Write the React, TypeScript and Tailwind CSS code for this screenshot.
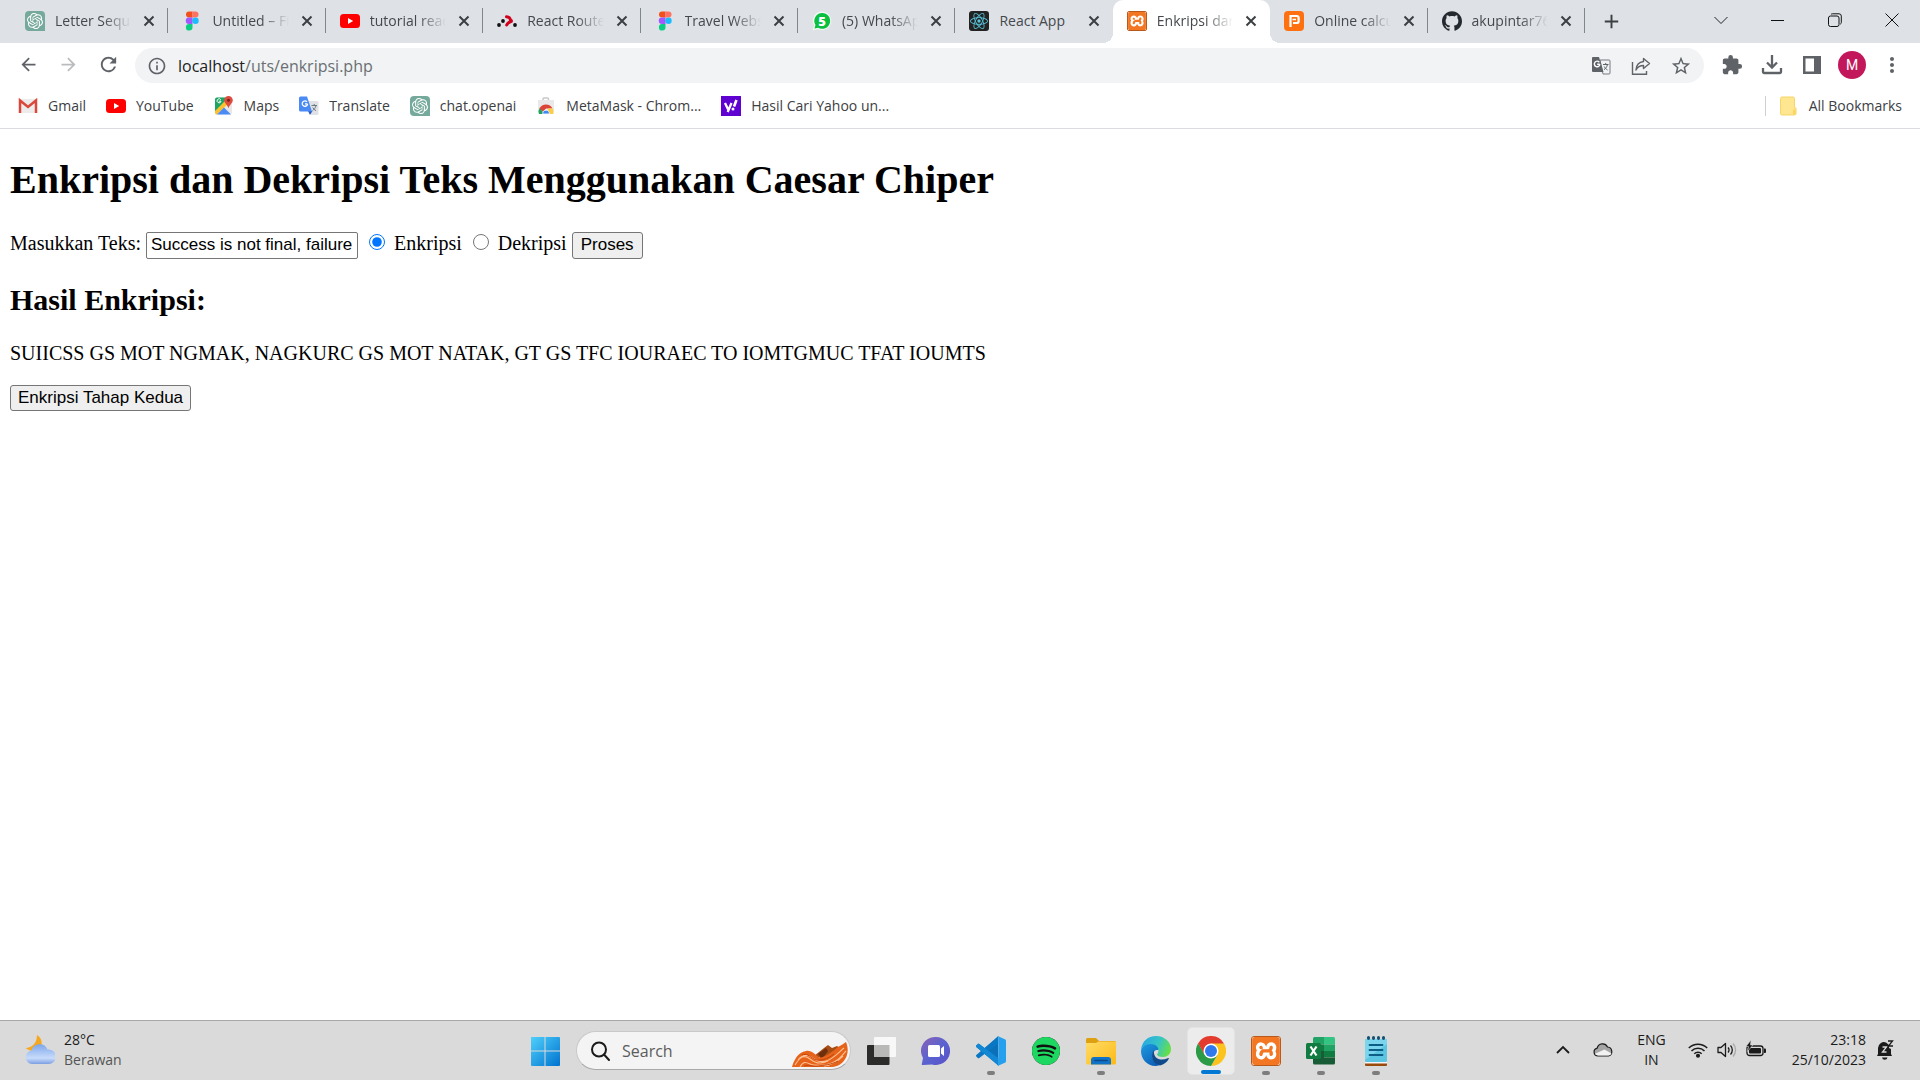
import React, { ReactNode } from "react";
import {
  MdArrowBack,
  MdArrowForward,
  MdRefresh,
  MdInfoOutline,
  MdStarBorder,
  MdExtension,
  MdMoreVert,
  MdAdd,
} from "react-icons/md";
import { SiOpenai, SiXampp, SiReact, SiGithub, SiSpotify } from "react-icons/si";

/* ---------- site icons ---------- */

const OpenAi = () => (
  <span className="flex size-5 items-center justify-center rounded-tl-[4px] rounded-tr-[4px] rounded-bl-[4px] bg-[#75a99b]">
    <SiOpenai className="size-4 text-white" />
  </span>
);

const Figma = () => (
  <svg viewBox="0 0 20 20" className="size-5">
    <path d="M7 0.5h3.5v6H7a3 3 0 0 1 0-6z" fill="#f24e1e" />
    <path d="M10.500 0.500h3a3 3 0 0 1 0 6h-3z" fill="#ff7262" />
    <path d="M7 6.500h3.500v6.500H7a3.200 3.200 0 0 1 0-6.500z" fill="#a259ff" />
    <circle cx="13.500" cy="9.700" r="3.200" fill="#1abcfe" />
    <path d="M7 13h3.500v3.300A3.300 3.300 0 1 1 7 13z" fill="#0acf83" />
  </svg>
);

const YouTube = () => (
  <svg viewBox="0 0 20 20" className="size-5">
    <rect x="0" y="3" width="20" height="14" rx="3.500" fill="#f00" />
    <path d="M8 7v6l5.200-3z" fill="#fff" />
  </svg>
);

const ReactRouter = () => (
  <svg viewBox="0 0 20 20" className="size-5">
    <g fill="#121212">
      <circle cx="2" cy="14" r="1.900" />
      <circle cx="6" cy="10" r="1.900" />
      <circle cx="18" cy="14" r="1.900" />
    </g>
    <path d="M9.500 5.800l2 .4a2 2 0 0 1 1.500 1.500l.5 1.500a2 2 0 0 1-1.500 2.300l-1.500 1.200-.8 1.300" fill="none" stroke="#d0021b" strokeWidth="3" strokeLinecap="round" />
    <circle cx="14" cy="10" r="2" fill="#d0021b" />
  </svg>
);

const WhatsApp = () => (
  <svg viewBox="0 0 20 20" className="size-5">
    <path d="M10.200 0.500a9.300 9.300 0 1 1-4.400 17.600L0.500 19.500l1.600-5A9.300 9.300 0 0 1 10.200 0.500z" fill="#f1f7f2" />
    <path d="M10.200 2a7.900 7.900 0 1 1-4 14.700L2.500 17.600l1-3.600A7.900 7.900 0 0 1 10.200 2z" fill="#0abf3f" />
    <text x="10" y="14.500" textAnchor="middle" fontSize="13" fontWeight="800" fill="#fff" fontFamily="Open Sans, sans-serif">5</text>
  </svg>
);

const ReactApp = () => (
  <span className="flex size-5 items-center justify-center rounded-[3px] bg-[#222]">
    <SiReact className="size-[18px] text-[#58c4dc]" />
  </span>
);

const Xampp = ({ large = false }: { large?: boolean }) => (
  <span
    className={
      large
        ? "flex size-[30px] items-center justify-center rounded-[3px] border border-[#b85a1c] bg-white"
        : "flex size-5 items-center justify-center rounded-[2px] border border-[#b85a1c] bg-white"
    }
  >
    <SiXampp className="size-full text-[#f37623]" />
  </span>
);

const Planet = () => (
  <svg viewBox="0 0 20 20" className="size-5">
    <rect width="20" height="20" rx="4" fill="#ff7110" />
    <path d="M6.500 16V5h6.300a1.800 1.800 0 0 1 1.800 1.800v3.400a1.800 1.800 0 0 1-1.800 1.800H9" fill="none" stroke="#fff" strokeWidth="2.200" />
    <path d="M8.500 8.500h3.500" stroke="#fff" strokeWidth="1.500" />
  </svg>
);

const Gmail = () => (
  <svg viewBox="0 0 20 20" className="size-5">
    <path d="M1 3h18v14H1z" fill="#ececec" />
    <path d="M2 17V4.500l8 6.500 8-6.500V17" fill="none" stroke="#d9483b" strokeWidth="2.500" />
  </svg>
);

const Maps = () => (
  <svg viewBox="0 0 20 20" className="size-5">
    <rect x="1" y="1.500" width="17" height="17" rx="2" fill="#e8e8e8" />
    <path d="M1 3.500a2 2 0 0 1 2-2h12L1 16z" fill="#1da462" />
    <path d="M1 15L14 2l3 3L3 18.500H2L1 17z" fill="#fbc02d" />
    <path d="M3 18.500l7-7 7 7z" fill="#4c8bf5" />
    <path d="M14.500 0a4.300 4.300 0 0 1 4.300 4.300c0 3-3.300 4.200-4.300 8.200-1-4-4.300-5.200-4.300-8.200A4.300 4.300 0 0 1 14.500 0z" fill="#dd4b3e" />
    <circle cx="14.500" cy="4.300" r="1.500" fill="#7d1f16" />
    <path d="M7 5.200H4.800M6.800 3.800a2 2 0 1 0 .2 1.600" fill="none" stroke="#fff" strokeWidth="1" />
  </svg>
);

const Translate = () => (
  <svg viewBox="0 0 20 20" className="size-5">
    <path d="M8 5h10a1.500 1.500 0 0 1 1.500 1.500v11A1.500 1.500 0 0 1 18 19h-6z" fill="#dfe1e5" />
    <path d="M9 15h4.500l-2.500 4z" fill="#2a56c6" />
    <path d="M1.500 0.500H8l5 15H1.500A1.500 1.500 0 0 1 0 14V2A1.500 1.500 0 0 1 1.500 0.500z" fill="#4a8af4" />
    <path d="M8.500 7.800H6M8 5.900a2.700 2.700 0 1 0 .6 2" fill="none" stroke="#fff" strokeWidth="1.300" />
    <path d="M12.500 9.500h5.500M15.200 8v1.500M17 9.500c-.5 2.500-2 4-3.500 5M13.700 11.500c.8 1.500 2 2.500 3.300 3.200" fill="none" stroke="#6b7a80" />
  </svg>
);

const WebStore = () => (
  <svg viewBox="0 0 20 20" className="size-5">
    <path d="M7 4V3a1 1 0 0 1 1-1h3.500a1 1 0 0 1 1 1v1" fill="none" stroke="#c8c8c8" strokeWidth="1.500" />
    <path d="M2 4h16v12.500a1.500 1.500 0 0 1-1.500 1.500h-13A1.500 1.500 0 0 1 2 16.500z" fill="#e9e9e9" />
    <path d="M3 18a7 7 0 0 1 1-6.500l4 6.500z" fill="#1da462" />
    <path d="M3.500 12.500a7.300 7.300 0 0 1 13 0H10l-3 3z" fill="#db4437" />
    <path d="M12 12.500h4.600c1 2 .9 4 .4 5.500h-5.500z" fill="#ffcd40" />
    <path d="M6.800 18a3.300 3.300 0 1 1 6.500 0z" fill="#4285f4" stroke="#fff" strokeWidth=".8" />
  </svg>
);

const Yahoo = () => (
  <svg viewBox="0 0 20 20" className="size-5">
    <rect width="20" height="20" fill="#5f01d1" />
    <path d="M4 7l3 6.300M10.500 7L6.700 16" stroke="#fff" strokeWidth="2.300" fill="none" />
    <path d="M15.500 4l-2.500 6.500" stroke="#fff" strokeWidth="2.600" />
    <circle cx="12" cy="13" r="1.500" fill="#fff" />
  </svg>
);

const Folder = () => (
  <svg viewBox="0 0 20 20" className="size-5">
    <path d="M3 1h11a1.500 1.500 0 0 1 1.500 1.500V12h1.500v5.500a1.500 1.500 0 0 1-1.500 1.500H3a1.500 1.500 0 0 1-1.500-1.500v-15A1.500 1.500 0 0 1 3 1z" fill="#ffe690" stroke="#f8d568" />
    <path d="M14 18.500v-4a1 1 0 0 1 1-1h1.500v4.500z" fill="#fbd65b" />
  </svg>
);

/* ---------- browser ---------- */

const tabs: { title: string; icon: ReactNode; active?: boolean }[] = [
  { title: "Letter Sequence", icon: <OpenAi /> },
  { title: "Untitled – Figma", icon: <Figma /> },
  { title: "tutorial react", icon: <YouTube /> },
  { title: "React Router", icon: <ReactRouter /> },
  { title: "Travel Website", icon: <Figma /> },
  { title: "(5) WhatsApp", icon: <WhatsApp /> },
  { title: "React App", icon: <ReactApp /> },
  { title: "Enkripsi dan", icon: <Xampp />, active: true },
  { title: "Online calculator", icon: <Planet /> },
  { title: "akupintar76", icon: <SiGithub className="size-5 text-[#24292f]" /> },
];

const Tab = ({ title, icon, active, line }: { title: string; icon: ReactNode; active?: boolean; line: boolean }) => (
  <div
    className={
      active
        ? "relative flex h-[43px] min-w-0 items-center rounded-t-[10px] bg-white pr-[9px] pb-[2px] pl-[14px] before:absolute before:bottom-0 before:-left-[10px] before:size-[10px] before:bg-[radial-gradient(circle_at_0_0,transparent_10px,white_10px)] after:absolute after:-right-[10px] after:bottom-0 after:size-[10px] after:bg-[radial-gradient(circle_at_100%_0,transparent_10px,white_10px)]"
        : "flex h-[43px] min-w-0 items-center pb-[2px] pl-[14px]"
    }
  >
    <span className="shrink-0">{icon}</span>
    <span
      className={
        title === "React App"
          ? "ml-[10px] min-w-0 flex-1 text-sm whitespace-nowrap text-[#45494d]"
          : "ml-[10px] min-w-0 flex-1 overflow-hidden text-sm whitespace-nowrap text-[#45494d] [mask-image:linear-gradient(to_right,black_calc(100%-28px),transparent)]"
      }
    >
      {title}
    </span>
    <button aria-label={`Close ${title}`} className="ml-2 flex size-5 shrink-0 items-center justify-center">
      <svg viewBox="0 0 12 12" className="size-3" fill="none" stroke="#3c4043" strokeWidth="2">
        <path d="M1.500 1.500l9 9M10.500 1.500l-9 9" />
      </svg>
    </button>
    {!active && <span className={line ? "ml-2 h-[25px] w-px bg-[#80868b]" : "ml-2 w-px"} />}
  </div>
);

const TitleBar = () => (
  <header className="flex h-[43px] items-center bg-[#dee1e6]">
    <nav className="box-content grid max-w-[1574px] flex-1 auto-cols-fr grid-flow-col pl-[11px]">
      {tabs.map((t, i) => (
        <Tab key={i} {...t} line={i !== 6} />
      ))}
    </nav>
    <button aria-label="New tab" className="ml-3 flex size-7 items-center justify-center">
      <MdAdd className="size-[23px] text-[#3c4043]" />
    </button>
    <div className="ml-auto flex pb-1">
      <button aria-label="Search tabs" className="flex h-9 w-[57px] items-center justify-center">
        <svg viewBox="0 0 14 14" className="size-[14px]" fill="none" stroke="#222"><path d="M.5 4L7 10.500 13.500 4" /></svg>
      </button>
      <button aria-label="Minimize" className="flex h-9 w-[57px] items-center justify-center">
        <svg viewBox="0 0 14 14" className="size-[14px]" stroke="#111"><path d="M0 7.500h13" /></svg>
      </button>
      <button aria-label="Restore" className="flex h-9 w-[57px] items-center justify-center">
        <svg viewBox="0 0 14 14" className="size-[14px]" fill="none" stroke="#111">
          <rect x=".5" y="3" width="10.500" height="10.500" rx="2" />
          <path d="M3 1.500A2 2 0 0 1 4.500.8H11a2.300 2.300 0 0 1 2.300 2.300v6.500a2 2 0 0 1-1 1.600" />
        </svg>
      </button>
      <button aria-label="Close window" className="flex h-9 w-[57px] items-center justify-center">
        <svg viewBox="0 0 14 14" className="size-[14px]" stroke="#111"><path d="M.5.5l13 13M13.500.5l-13 13" /></svg>
      </button>
    </div>
  </header>
);

const toolButton = "flex w-10 items-center justify-center";

const Toolbar = () => (
  <div className="flex h-[43px] items-center bg-white px-2 text-[#5f6368]">
    <button aria-label="Back" className={toolButton}><MdArrowBack className="size-[21px]" /></button>
    <button aria-label="Forward" className={toolButton}><MdArrowForward className="size-[21px] text-[#babcbe]" /></button>
    <button aria-label="Reload" className={toolButton}><MdRefresh className="size-[23px]" /></button>
    <div className="mt-[2px] ml-[7px] flex h-[35px] flex-1 items-center rounded-full bg-[#f1f3f4] pr-[3px] pl-3">
      <MdInfoOutline className="size-5" />
      <a href="#" className="ml-[11px] flex-1 text-base text-[#6b6f73]">
        <span className="text-[#202124]">localhost</span>/uts/enkripsi.php
      </a>
      <button aria-label="Translate" className={toolButton}>
        <svg viewBox="0 0 20 20" className="size-5">
          <path d="M9 4h9a1 1 0 0 1 1 1v12a1 1 0 0 1-1 1h-6z" fill="none" stroke="#777b80" />
          <path d="M2 1h6l4.500 15H2a1 1 0 0 1-1-1V2a1 1 0 0 1 1-1z" fill="#5f6368" />
          <path d="M8.800 8.200H6.200M8.300 6.200a2.800 2.800 0 1 0 .6 2" fill="none" stroke="#fff" strokeWidth="1.400" />
          <path d="M12 8.500h5.500M14.700 7v1.500M16.500 8.500c-.6 2.500-1.800 4-3.500 5.200M13.200 10.500c.8 1.700 2 2.700 3.300 3.500" fill="none" stroke="#5f6368" />
        </svg>
      </button>
      <button aria-label="Share" className={toolButton}>
        <svg viewBox="0 0 20 20" className="size-5" fill="none" stroke="#5f6368" strokeWidth="1.400">
          <path d="M1.500 6v12.300h14V15" />
          <path d="M12.500 2.500L18.500 7.500l-6 5v-3c-3.500 0-6 1.500-7.500 4.500.3-4.500 3-8 7.500-8.500z" strokeLinejoin="round" />
        </svg>
      </button>
      <button aria-label="Bookmark this page" className={toolButton}><MdStarBorder className="size-[22px]" /></button>
    </div>
    <div className="ml-2 flex items-center">
      <button aria-label="Extensions" className={toolButton}><MdExtension className="size-[22px]" /></button>
      <button aria-label="Downloads" className={toolButton}>
        <svg viewBox="0 0 22 22" className="size-[22px]" fill="none" stroke="#5f6368" strokeWidth="2.300">
          <path d="M11 1v12M6 8.500l5 5 5-5M2 14v4a1 1 0 0 0 1 1h16a1 1 0 0 0 1-1v-4" />
        </svg>
      </button>
      <button aria-label="Side panel" className={toolButton}>
        <svg viewBox="0 0 20 20" className="size-5"><path d="M1 1h18v18H1zM3.500 3.500v13H12v-13z" fill="#5f6368" fillRule="evenodd" /></svg>
      </button>
      <button aria-label="Profile" className={toolButton}>
        <span className="flex size-7 items-center justify-center rounded-full bg-[#c2185b] text-sm text-white font-['Roboto',sans-serif]">M</span>
      </button>
      <button aria-label="Menu" className={toolButton}><MdMoreVert className="size-6" /></button>
    </div>
  </div>
);

const bookmarks: { label: string; icon: ReactNode }[] = [
  { label: "Gmail", icon: <Gmail /> },
  { label: "YouTube", icon: <YouTube /> },
  { label: "Maps", icon: <Maps /> },
  { label: "Translate", icon: <Translate /> },
  { label: "chat.openai", icon: <OpenAi /> },
  { label: "MetaMask - Chrom...", icon: <WebStore /> },
  { label: "Hasil Cari Yahoo un...", icon: <Yahoo /> },
];

const BookmarkBar = () => (
  <nav className="flex h-[43px] items-center gap-5 border-b border-[#dadce0] bg-white pr-[18px] pb-[2px] pl-[18px] text-sm text-[#3c4043]">
    {bookmarks.map((b) => (
      <a key={b.label} href="#" className="flex items-center gap-[10px] whitespace-nowrap">
        {b.icon}
        {b.label}
      </a>
    ))}
    <a href="#" className="ml-auto flex items-center gap-[10px] border-l border-[#cdd0d4] pl-[13px] whitespace-nowrap">
      <Folder />
      All Bookmarks
    </a>
  </nav>
);

/* ---------- page ---------- */

const Page = () => (
  <main className="flex-1 bg-white px-[10px] text-xl leading-[23px] text-black font-['Liberation_Serif',serif]">
    <h1 className="mt-7 mb-[27px] text-[40px] leading-[46px] font-bold">Enkripsi dan Dekripsi Teks Menggunakan Caesar Chiper</h1>
    <form onSubmit={(e) => e.preventDefault()}>
      <label htmlFor="teks">Masukkan Teks:</label>{" "}
      <input
        id="teks"
        type="text"
        defaultValue="Success is not final, failure is not fatal, it is the courage to continue that counts"
        className="h-[27px] w-[212px] rounded-[2px] border border-[#767676] bg-white px-1 text-[17px] leading-5 font-['Liberation_Sans',sans-serif]"
      />{" "}
      <input id="enkripsi" type="radio" name="mode" defaultChecked className="mt-1 mr-1 ml-[6px] size-4 align-baseline" />{" "}
      <label htmlFor="enkripsi">Enkripsi</label>{" "}
      <input id="dekripsi" type="radio" name="mode" className="mt-1 mr-1 ml-[6px] size-4 align-baseline" />{" "}
      <label htmlFor="dekripsi">Dekripsi</label>{" "}
      <button className="h-[27px] rounded-[3px] border border-[#767676] bg-[#efefef] px-2 text-[17px] leading-5 font-['Liberation_Sans',sans-serif]">
        Proses
      </button>
    </form>
    <h2 className="mt-6 mb-[25px] text-3xl leading-[34px] font-bold">Hasil Enkripsi:</h2>
    <p className="mb-5">SUIICSS GS MOT NGMAK, NAGKURC GS MOT NATAK, GT GS TFC IOURAEC TO IOMTGMUC TFAT IOUMTS</p>
    <button className="block h-[26px] rounded-[3px] border border-[#767676] bg-[#efefef] px-[7px] text-[17px] leading-5 font-['Liberation_Sans',sans-serif]">
      Enkripsi Tahap Kedua
    </button>
  </main>
);

/* ---------- taskbar ---------- */

const WindowsLogo = () => (
  <svg viewBox="0 0 30 30" className="size-[30px]">
    <defs>
      <linearGradient id="win" x1="0" y1="0" x2="1" y2="1">
        <stop offset="0" stopColor="#4fd0fb" />
        <stop offset="1" stopColor="#0072cf" />
      </linearGradient>
    </defs>
    <path d="M1 1h13.500v13.500H1zM15.500 1H29a1 1 0 0 1 1 1v12.500H15.500zM1 15.500h13.500V30H2a1 1 0 0 1-1-1zM15.500 15.500H30V29a1 1 0 0 1-1 1H15.500z" fill="url(#win)" />
  </svg>
);

const Canyon = () => (
  <svg viewBox="0 0 56 26" className="h-[26px] w-14">
    <path d="M22 14l10-8 4-3 4 3 5-2 3 2-12 12z" fill="#a84d14" />
    <path d="M26 12l8-6 2 3-6 8z" fill="#6e2f0c" />
    <path d="M0 25c2-7 6-15 14-16 6-1 9 4 14 7 7-2 13-7 18-11 4-2 6-4 8-5 3 7 2 15-3 20-3 3-7 5-13 5z" fill="#e8631a" />
    <path d="M3 23c5-8 9-11 15-6s12 5 18 2M6 18c4-5 8-6 13-3s8 6 15 4 12-8 18-13M8 25c3-6 6-5 10-3s14 2 22-1 10-8 14-12M32 24c8-1 14-5 19-10" fill="none" stroke="#ffc193" strokeWidth="1.100" />
    <path d="M10 13c5-2 7 1 12 4s14 0 20-5M12 24c4-2 8 1 14 0s13-1 20-5" fill="none" stroke="#c0440c" strokeWidth="1" />
  </svg>
);

const TaskView = () => (
  <svg viewBox="0 0 30 30" className="size-[30px]">
    <rect x="1" y="9" width="22.500" height="20" rx="1" fill="#2c2c2b" />
    <rect x="8" y="1" width="22" height="20" rx="1" fill="#f8f8f8" />
    <path d="M8 9h15.500v12H8z" fill="#b9b9b8" />
  </svg>
);

const Chat = () => (
  <svg viewBox="0 0 30 30" className="size-[30px]">
    <defs>
      <linearGradient id="chat" x1="0" y1="0" x2="1" y2="1">
        <stop offset="0" stopColor="#8c62b4" />
        <stop offset=".5" stopColor="#5a63d0" />
        <stop offset="1" stopColor="#5a50c8" />
      </linearGradient>
    </defs>
    <path d="M15 1a14 14 0 1 1-4 27.400L2 29c-1.300 0-1.500-.5-1-2l1-5A14 14 0 0 1 15 1z" fill="url(#chat)" />
    <rect x="7" y="9" width="12" height="12" rx="1.500" fill="#fff" />
    <path d="M20 12.500l3-2.500v10l-3-2.500z" fill="#fff" />
  </svg>
);

const VsCode = () => (
  <svg viewBox="0 0 100 100" className="size-[30px]">
    <path d="M74 1L30 42 11 27c-2-1.500-4-1-5 0l-5 5c-1.300 1.300-1.300 3.300 0 5l74 61z" fill="#0b70b8" />
    <path d="M74 1v25L11 73c-2 1.500-4 1-5 0l-5-5c-1.300-1.300-1.300-3.500 0-5z" fill="#0a77c4" />
    <path d="M1 37l74 62V74L11 27c-2-1.500-4-1-5 0l-5 5c-1.300 1.300-1.300 3.500 0 5z" fill="#1287d3" />
    <path d="M74 1l22 10c3 1.500 4 3.500 4 6v66c0 2.500-1 4.500-4 6L74 99c-2 .5-3 0-4-1 2 1 5 0 5-3V5c0-3-3-4-5-3 1-1 2-1.500 4-1z" fill="#24a0ee" />
  </svg>
);

const Explorer = () => (
  <svg viewBox="0 0 30 30" className="size-[30px]">
    <defs>
      <linearGradient id="dir" x1="0" y1="0" x2="1" y2="1">
        <stop offset="0" stopColor="#ffdc66" />
        <stop offset="1" stopColor="#fdb918" />
      </linearGradient>
    </defs>
    <path d="M0 3.500A1.500 1.500 0 0 1 1.500 2H10l3 3h16.500v4H0z" fill="#dda010" />
    <path d="M0 7h10l2.500-1.500H29a1 1 0 0 1 1 1V27a1.500 1.500 0 0 1-1.500 1.500h-27A1.500 1.500 0 0 1 0 27z" fill="url(#dir)" />
    <path d="M5 28.500V24a3 3 0 0 1 3-3h14a3 3 0 0 1 3 3v4.500z" fill="#1173c5" />
    <path d="M9 24.500h12" stroke="#084a8c" strokeWidth="1.500" strokeLinecap="round" />
  </svg>
);

const Edge = () => (
  <svg viewBox="0 0 30 30" className="size-[30px]">
    <defs>
      <linearGradient id="edgeTop" x1="0" y1=".3" x2="1" y2=".6">
        <stop offset="0" stopColor="#2aa7e4" />
        <stop offset=".55" stopColor="#35c5c4" />
        <stop offset="1" stopColor="#69e040" />
      </linearGradient>
      <linearGradient id="edgeBody" x1="0" y1="0" x2=".6" y2="1">
        <stop offset="0" stopColor="#1b9de2" />
        <stop offset="1" stopColor="#0f62b8" />
      </linearGradient>
    </defs>
    <path d="M0 14C1 5 7 0 15 0c9 0 15 6.500 15 13 0 5-3.500 8-8 8-4 0-6-1.500-6-2.500 0-.8 1.500-1.500 1.500-4 0-3.500-4-5.500-8-5.500C5 9 1 11 0 14z" fill="url(#edgeTop)" />
    <path d="M0 15c.5-4 4.500-7 9.500-7 5 0 8 3 8 6-6-1-9 8-2 13 2 1.500 3 2 3 2-1.500.7-3 1-4 1C6 30 0 23 0 15z" fill="url(#edgeBody)" />
    <path d="M13 14c-4 5-2 14 6 15.500 4-1 7-3.500 8.700-6.500.5-1-.3-1.200-1-.8-7 3.500-15 .3-13.700-8.200z" fill="#114a8b" />
  </svg>
);

const Chrome = () => (
  <svg viewBox="0 0 30 30" className="size-[30px]">
    <path d="M15 15L2 7.500A15 15 0 0 1 28 7.500z" fill="#e33b2e" />
    <path d="M15 7.500h13A15 15 0 0 1 15 30l6.500-11.200z" fill="#fcc31e" />
    <path d="M2 7.500A15 15 0 0 0 15 30l6.500-11.200-13 0z" fill="#2c9b48" />
    <path d="M2 7.500L8.500 18.800 15 15V7.500z" fill="#e33b2e" />
    <path d="M2 7.500L8.500 18.800 12 20 4 16z" fill="#2c9b48" />
    <circle cx="15" cy="15" r="7.500" fill="#fff" />
    <circle cx="15" cy="15" r="6" fill="#3079ed" />
  </svg>
);

const Excel = () => (
  <svg viewBox="0 0 30 30" className="size-[30px]">
    <path d="M8.500 1H18v7.500H7V2.500A1.500 1.500 0 0 1 8.500 1z" fill="#21a366" />
    <path d="M18 1h9.500A1.500 1.500 0 0 1 29 2.500v6H18z" fill="#33c481" />
    <path d="M7 8.500h11V15H7z" fill="#107c41" />
    <path d="M18 8.500h11V15H18z" fill="#21a366" />
    <path d="M18 15h11v6.500H18z" fill="#107c41" />
    <path d="M7 15h11v6.500h11V27a1.500 1.500 0 0 1-1.500 1.500h-19A1.500 1.500 0 0 1 7 27z" fill="#185c37" />
    <rect x="0" y="7" width="15" height="16" rx="1.500" fill="#107c41" />
    <path d="M4.500 10.500l6 9M10.500 10.500l-6 9" stroke="#fff" strokeWidth="2.200" />
  </svg>
);

const Notepad = () => (
  <svg viewBox="0 0 30 30" className="size-[30px]">
    <rect x="4" y="25" width="22" height="5" rx="1" fill="#9a4a0c" />
    <rect x="4" y="24" width="22" height="3.500" fill="#f4f4f4" />
    <rect x="4" y="3" width="22" height="23" rx="1" fill="#5cc5e2" />
    <path d="M4 3h22v5L4 24z" fill="#7bd5ec" />
    <path d="M8.500 9h13M8.500 14h13M8.500 19h13" stroke="#0c5e86" strokeWidth="1.800" strokeLinecap="round" />
    <g fill="#17506f">
      <ellipse cx="7.500" cy="2" rx="1.600" ry="2" />
      <ellipse cx="12.500" cy="2" rx="1.600" ry="2" />
      <ellipse cx="17.500" cy="2" rx="1.600" ry="2" />
      <ellipse cx="22.500" cy="2" rx="1.600" ry="2" />
    </g>
  </svg>
);

const apps: { name: string; icon: ReactNode; state?: "running" | "active" }[] = [
  { name: "Task view", icon: <TaskView /> },
  { name: "Chat", icon: <Chat /> },
  { name: "Visual Studio Code", icon: <VsCode />, state: "running" },
  {
    name: "Spotify",
    icon: (
      <span className="flex size-7 rounded-full bg-[#111]">
        <SiSpotify className="size-7 text-[#1ed760]" />
      </span>
    ),
  },
  { name: "File Explorer", icon: <Explorer />, state: "running" },
  { name: "Edge", icon: <Edge /> },
  { name: "Chrome", icon: <Chrome />, state: "active" },
  { name: "XAMPP", icon: <Xampp large />, state: "running" },
  { name: "Excel", icon: <Excel />, state: "running" },
  { name: "Notepad", icon: <Notepad />, state: "running" },
];

const Taskbar = () => (
  <footer className="grid h-[60px] grid-cols-[1fr_auto_1fr] items-center border-t border-[#a8a8a8] bg-[#dadada] text-sm leading-5 text-[#1b1b1b]">
    <button className="ml-[25px] flex items-center gap-[9px] justify-self-start pb-[2px] text-left">
      <svg viewBox="0 0 30 30" className="size-[30px]">
        <defs>
          <linearGradient id="cloud" x1="0" y1="0" x2="0" y2="1">
            <stop offset="0" stopColor="#7da6ea" />
            <stop offset=".7" stopColor="#c8dcfb" />
            <stop offset="1" stopColor="#7c9fe2" />
          </linearGradient>
        </defs>
        <path d="M12 0c5 3 6 9 3 13-3 3.500-9 4-14.500 0C7 13 12 8 12 0z" fill="#f5a81f" />
        <path d="M7 29a6.800 6.800 0 0 1-.5-13.500 8.500 8.500 0 0 1 16-1A7.300 7.300 0 1 1 23 29z" fill="url(#cloud)" />
      </svg>
      <span>
        28°C
        <br />
        <span className="text-[#555]">Berawan</span>
      </span>
    </button>
    <div className="flex items-center">
      <button aria-label="Start" className="flex w-[55px] items-center justify-center"><WindowsLogo /></button>
      <label className="mr-[2px] ml-1 flex h-[39px] w-[275px] items-center overflow-hidden rounded-full border border-[#c9c9c9] border-b-[#a8a8a8] bg-[#f4f4f4] pr-[2px] pl-[13px]">
        <svg viewBox="0 0 20 20" className="size-5 shrink-0" fill="none" stroke="#1b1b1b" strokeWidth="2">
          <circle cx="9" cy="8.500" r="7" />
          <path d="M14 13.500l5 5.500" strokeLinecap="round" />
        </svg>
        <input type="text" aria-label="Search" placeholder="Search" className="ml-3 w-0 flex-1 bg-transparent text-base placeholder:text-[#5c5c5c]" />
        <span className="mt-[9px] shrink-0"><Canyon /></span>
      </label>
      {apps.map((a) => (
        <button key={a.name} aria-label={a.name} className="flex w-[55px] justify-center">
          <span
            className={
              a.state === "active"
                ? "relative flex size-12 items-center justify-center rounded-[5px] border border-[#e3e3e3] bg-[#ececec]"
                : "relative flex size-12 items-center justify-center"
            }
          >
            {a.icon}
            {a.state === "running" && <span className="absolute bottom-0 h-1 w-2 rounded-full bg-[#7d7d7d]" />}
            {a.state === "active" && <span className="absolute bottom-0 h-1 w-5 rounded-full bg-[#0078d4]" />}
          </span>
        </button>
      ))}
    </div>
    <div className="flex items-center justify-self-end pr-[26px] pb-[2px]">
      <button aria-label="Hidden icons">
        <svg viewBox="0 0 14 14" className="size-[14px]" fill="none" stroke="#1b1b1b" strokeWidth="1.800"><path d="M1 10l6-6 6 6" /></svg>
      </button>
      <button aria-label="OneDrive" className="ml-[23px]">
        <svg viewBox="0 0 20 20" className="size-5">
          <path d="M5 16a4 4 0 0 1-.8-7.900A5.500 5.500 0 0 1 14.500 7 4.600 4.600 0 0 1 15.500 16z" fill="#a5a5a5" stroke="#1b1b1b" strokeWidth="1.200" />
          <path d="M5 15.400c-1.200 0-2.500-.6-3-1.700L11.500 9.500l7 4c-.6 1.200-1.800 1.900-3 1.900z" fill="#f2f2f2" />
        </svg>
      </button>
      <button className="ml-6 text-center">ENG<br />IN</button>
      <button aria-label="Network, sound and battery" className="ml-[22px] flex items-center gap-[9px]">
        <svg viewBox="0 0 20 20" className="size-5" fill="none" stroke="#1b1b1b" strokeWidth="1.500">
          <path d="M.8 8a13 13 0 0 1 18.400 0M3.500 11a9.200 9.200 0 0 1 13 0M6.300 13.800a5.300 5.300 0 0 1 7.400 0" />
          <circle cx="10" cy="15.800" r="1.300" fill="#1b1b1b" />
        </svg>
        <svg viewBox="0 0 20 20" className="size-5" fill="none" stroke="#1b1b1b" strokeWidth="1.300">
          <path d="M1 7.500h3L8.500 3.500v13L4 12.500H1z" strokeLinejoin="round" />
          <path d="M11 7.500a3.500 3.500 0 0 1 0 5M13.500 5.500a6.500 6.500 0 0 1 0 9" />
          <path d="M16 3.500a9.500 9.500 0 0 1 0 13" stroke="#a9a9a9" />
        </svg>
        <svg viewBox="0 0 20 20" className="size-5">
          <rect x="1" y="6" width="16" height="9.500" rx="2.500" fill="none" stroke="#1b1b1b" strokeWidth="1.300" />
          <rect x="3" y="8" width="12" height="5.500" rx="1" fill="#1b1b1b" />
          <path d="M18 8.500h1a1 1 0 0 1 1 1v2.500a1 1 0 0 1-1 1h-1z" fill="#1b1b1b" />
          <path d="M5 0L0 6.500h2.500L1.500 11.500 7 5H4.500z" fill="#1b1b1b" stroke="#dadada" strokeWidth=".6" />
        </svg>
      </button>
      <button className="ml-[26px] text-right">23:18<br />25/10/2023</button>
      <button aria-label="Notifications" className="ml-[10px]">
        <svg viewBox="0 0 18 20" className="h-5 w-[18px]">
          <path d="M2 14V8a6 6 0 0 1 8-5.500L13 5v3l2 1v5l1 2H1z" fill="#1b1b1b" />
          <path d="M6 17.500h5.500a2.800 2.800 0 0 1-5.500 0z" fill="#1b1b1b" />
          <path d="M6.500 7h4l-4 5h4" fill="none" stroke="#dadada" strokeWidth="1.300" />
          <path d="M12 1h4.500L12.500 6H17" fill="none" stroke="#1b1b1b" strokeWidth="1.300" />
        </svg>
      </button>
    </div>
  </footer>
);

export default function App() {
  return (
    <div className="flex min-h-screen flex-col bg-white font-['Open_Sans',sans-serif]">
      <TitleBar />
      <Toolbar />
      <BookmarkBar />
      <Page />
      <Taskbar />
    </div>
  );
}
